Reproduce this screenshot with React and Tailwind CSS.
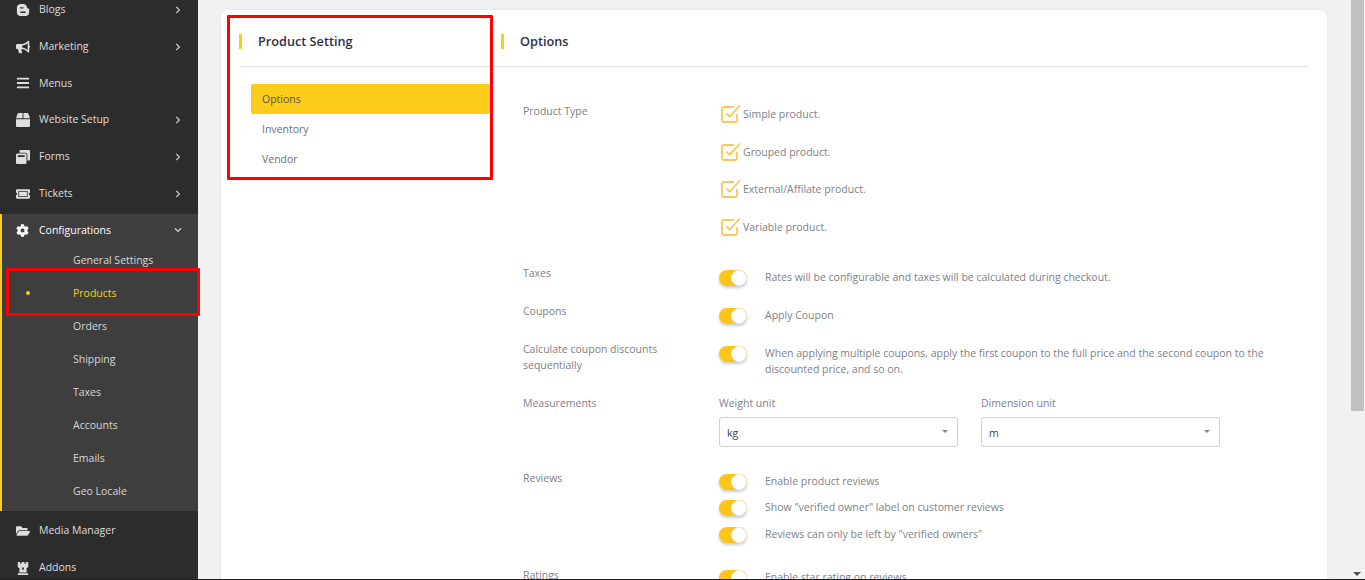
import React from 'react';
import {
  FaBloggerB,
  FaBullhorn,
  FaBars,
  FaBox,
  FaWindowRestore,
  FaTicketAlt,
  FaCog,
  FaFolderOpen,
  FaChessRook,
  FaChevronRight,
  FaChevronDown,
} from 'react-icons/fa';

const subLinks = ['General Settings', 'Products', 'Orders', 'Shipping', 'Taxes', 'Accounts', 'Emails', 'Geo Locale'];

const SideItem = ({ icon: Icon, label, arrow = true }) => (
  <div className="flex h-[36.8px] items-center pl-[16px] pr-[16px] text-[#dedede]">
    <span className="flex w-[23px] shrink-0 items-center">
      <Icon className="text-[14px]" />
    </span>
    <span className="flex-1 text-[10.5px]">{label}</span>
    {arrow && <FaChevronRight className="text-[8px] text-[#cfcfcf]" />}
  </div>
);

const Sidebar = () => (
  <aside className="w-[198px] shrink-0 bg-[#2c2c2c]">
    <div className="-mt-[8.6px] mb-[1.8px]">
      <SideItem icon={FaBloggerB} label="Blogs" />
      <SideItem icon={FaBullhorn} label="Marketing" />
      <SideItem icon={FaBars} label="Menus" arrow={false} />
      <SideItem icon={FaBox} label="Website Setup" />
      <SideItem icon={FaWindowRestore} label="Forms" />
      <SideItem icon={FaTicketAlt} label="Tickets" />
    </div>

    {/* Open group */}
    <div className="border-l-2 border-[#fdcc1a] bg-[#3e3e3e] pb-[3px] pt-[3px]">
      <div className="flex h-[27px] items-center pl-[14px] pr-[16px] text-white">
        <span className="flex w-[23px] shrink-0 items-center">
          <FaCog className="text-[13px]" />
        </span>
        <span className="flex-1 text-[10.5px]">Configurations</span>
        <FaChevronDown className="text-[8px] text-[#cfcfcf]" />
      </div>
      {subLinks.map((link) => (
        <div
          key={link}
          className={`flex h-[33px] items-center text-[10.5px] ${link === 'Products' ? 'text-[#fdcc1a]' : 'text-[#d8d8d8]'}`}
        >
          <span className="flex w-[71px] shrink-0 pl-[24px]">
            {link === 'Products' && <span className="h-[4px] w-[4px] rounded-full bg-[#fdcc1a]" />}
          </span>
          {link}
        </div>
      ))}
    </div>

    <div className="pt-[1.5px]">
      <SideItem icon={FaFolderOpen} label="Media Manager" arrow={false} />
      <SideItem icon={FaChessRook} label="Addons" arrow={false} />
    </div>
  </aside>
);

const CheckIcon = () => (
  <svg width="20" height="20" viewBox="0 0 20 20" fill="none" className="shrink-0">
    <path d="M16 10v6a2 2 0 0 1-2 2H3a2 2 0 0 1-2-2V5a2 2 0 0 1 2-2h10" stroke="#fbc75a" strokeWidth="1.8" />
    <path d="M5.5 9.5l3.2 3.2L19 1.5" stroke="#fbc75a" strokeWidth="1.8" />
  </svg>
);

const Toggle = () => (
  <span className="relative block h-[16px] w-[28px] shrink-0 rounded-full bg-[#fdc51a] shadow-[0_2px_3px_rgba(0,0,0,0.2)]">
    <span className="absolute right-0 top-0 h-[16px] w-[16px] rounded-full border border-[#eee] bg-white" />
  </span>
);

const ToggleRow = ({ children }) => (
  <div className="flex items-start gap-[18px]">
    <span className="mt-[1px]">
      <Toggle />
    </span>
    <span className="leading-[16px]">{children}</span>
  </div>
);

const SelectBox = ({ label, value }) => (
  <div className="w-[239px]">
    <div className="mb-[6px] h-[16px] leading-[16px]">{label}</div>
    <div className="flex h-[30px] items-center justify-between rounded-[3px] border border-[#cfcfd4] pl-[7px] pr-[9px] text-[#444]">
      <span className="pt-[4px]">{value}</span>
      <span className="h-0 w-0 border-x-[3px] border-t-[3px] border-x-transparent border-t-[#888]" />
    </div>
  </div>
);

const SectionTitle = ({ children, className }) => (
  <div className={`flex items-center gap-[16px] ${className}`}>
    <span className="h-[15px] w-[3px] bg-[#fdcc1a]" />
    <span className="text-[12.7px] font-semibold text-[#2f3045]">{children}</span>
  </div>
);

const Row = ({ label, className, children }) => (
  <div className={`flex ${className}`}>
    <div className="w-[196px] shrink-0 pr-[20px] leading-[16px]">{label}</div>
    <div className="flex-1">{children}</div>
  </div>
);

export default function App() {
  return (
    <div className="relative h-[580px] w-[1365px] overflow-hidden bg-[#f1f1f1] font-['Open_Sans',sans-serif]">
      <div className="flex h-[579px] overflow-hidden">
        <Sidebar />

        <main className="min-w-0 flex-1 pl-[23px] pr-[23px] pt-[10px]">
          <div className="min-h-[700px] rounded-t-[8px] bg-white pl-[18px] pr-[19px] text-[10.5px] text-[#80808a] shadow-[0_0_3px_rgba(0,0,0,0.08)]">
            <div className="flex h-[57px] items-end border-b border-[#e0e0e0] pb-[15px]">
              <SectionTitle className="w-[262px]">Product Setting</SectionTitle>
              <SectionTitle>Options</SectionTitle>
            </div>

            <div className="flex">
              {/* Settings nav */}
              <div className="w-[251px] shrink-0 pl-[12px] pt-[17px] text-[10.5px]">
                <div className="flex h-[30px] items-center rounded-[2px] bg-[#fdcc1a] pl-[11px] pt-[2px] text-[#555]">Options</div>
                <div className="flex h-[30px] items-center pl-[11px] pt-[2px] text-[#6d6d78]">Inventory</div>
                <div className="flex h-[30px] items-center pl-[11px] pt-[2px] text-[#6d6d78]">Vendor</div>
              </div>

              {/* Options form */}
              <div className="flex-1 pl-[33px] pt-[36px]">
                <Row label="Product Type">
                  <div className="flex flex-col gap-[17.5px] pl-[2px] pt-[1px]">
                    {['Simple product.', 'Grouped product.', 'External/Affilate product.', 'Variable product.'].map((t) => (
                      <div key={t} className="flex h-[20px] items-center gap-[2px]">
                        <CheckIcon />
                        <span className="pt-[2px]">{t}</span>
                      </div>
                    ))}
                  </div>
                </Row>
                <Row label="Taxes" className="mt-[28px]">
                  <div className="pt-[4px]">
                    <ToggleRow>Rates will be configurable and taxes will be calculated during checkout.</ToggleRow>
                  </div>
                </Row>
                <Row label="Coupons" className="mt-[17px]">
                  <div className="pt-[4px]">
                    <ToggleRow>Apply Coupon</ToggleRow>
                  </div>
                </Row>
                <Row label="Calculate coupon discounts sequentially" className="mt-[17px]">
                  <div className="pt-[4px]">
                    <ToggleRow>
                      When applying multiple coupons, apply the first coupon to the full price and the second coupon to the
                      discounted price, and so on.
                    </ToggleRow>
                  </div>
                </Row>
                <Row label="Measurements" className="mt-[18px]">
                  <div className="flex gap-[23px]">
                    <SelectBox label="Weight unit" value="kg" />
                    <SelectBox label="Dimension unit" value="m" />
                  </div>
                </Row>
                <Row label="Reviews" className="mt-[23px]">
                  <div className="flex flex-col gap-[9.5px] pt-[3px]">
                    <ToggleRow>Enable product reviews</ToggleRow>
                    <ToggleRow>Show "verified owner" label on customer reviews</ToggleRow>
                    <ToggleRow>Reviews can only be left by "verified owners"</ToggleRow>
                  </div>
                </Row>
                <Row label="Ratings" className="mt-[24px]">
                  <div className="pt-[2px]">
                    <ToggleRow>Enable star rating on reviews</ToggleRow>
                  </div>
                </Row>
              </div>
            </div>
          </div>
        </main>

        {/* Page scrollbar */}
        <div className="relative w-[15px] shrink-0 bg-[#f1f1f1]">
          <div className="h-[411px] w-[13px] translate-x-px bg-[#c1c1c1]" />
          <span className="absolute bottom-[3px] left-[3px] h-0 w-0 border-x-[4px] border-t-[4px] border-x-transparent border-t-[#505050]" />
        </div>
      </div>
      <div className="h-px bg-[#222]" />

      {/* Red annotation boxes */}
      <div className="absolute left-[227px] top-[15px] h-[165px] w-[266px] rounded-[1px] border-[3px] border-[#ff0000]" />
      <div className="absolute left-[6px] top-[268px] h-[48px] w-[194px] rounded-[1px] border-[3px] border-[#ff0000]" />
    </div>
  );
}
